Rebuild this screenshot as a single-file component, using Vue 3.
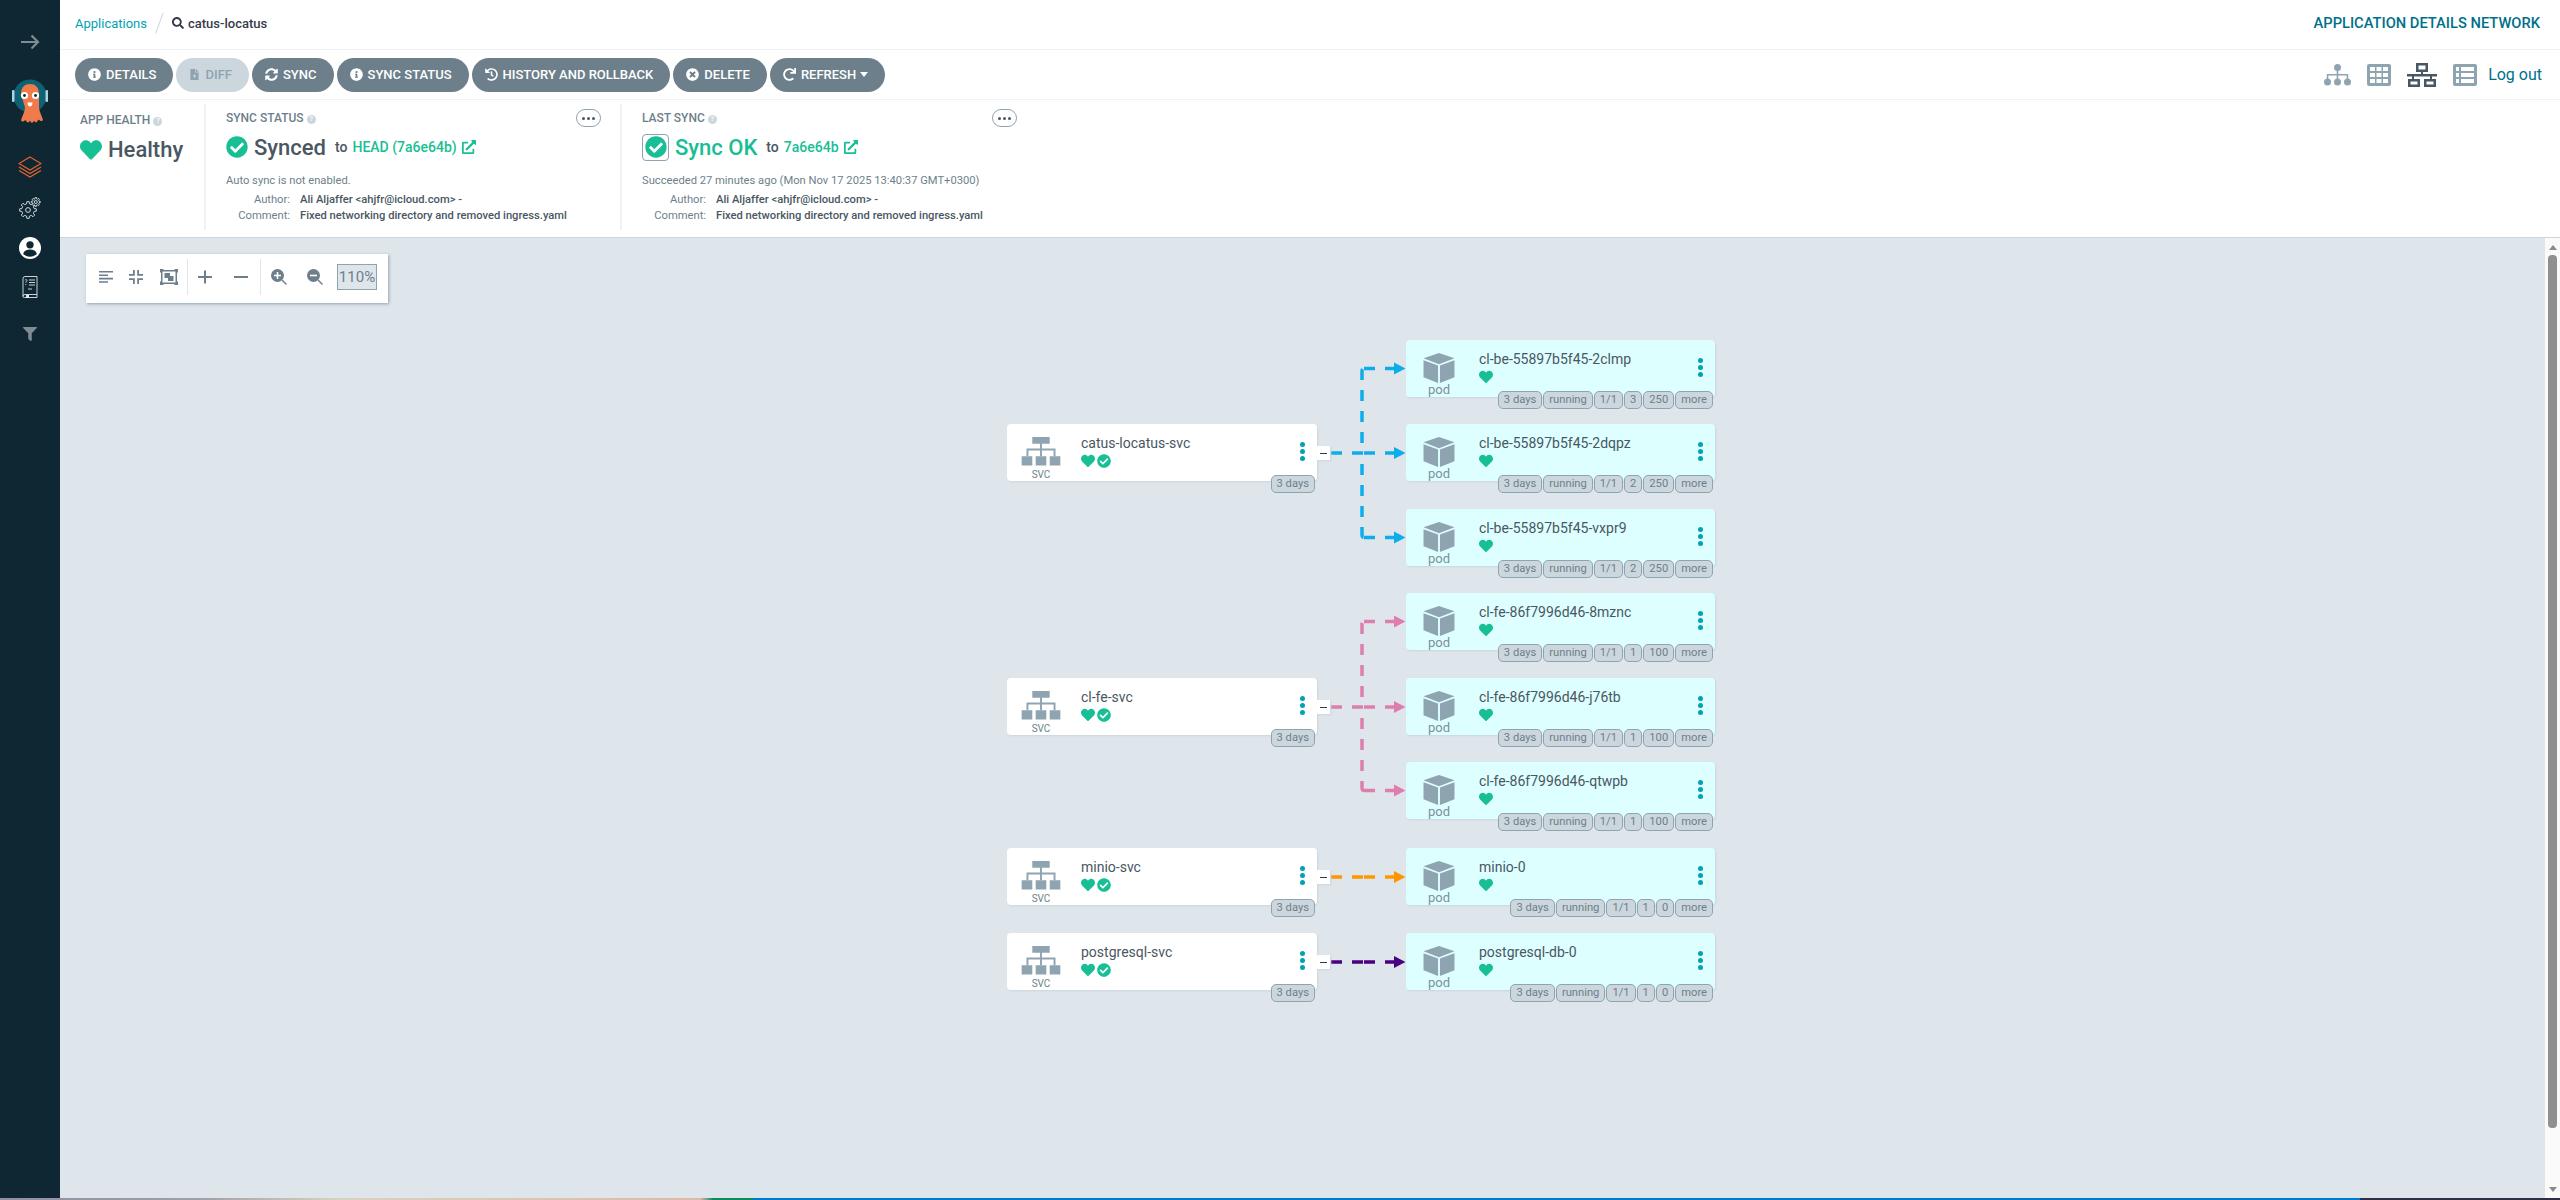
<template>
  <div class="page">
    <div class="frame">
      <aside class="sidebar">
        <svg class="nav-arrow" viewBox="0 0 20 16"><path d="M1 8h17M11.500 1.500 18 8l-6.500 6.500" fill="none" stroke="currentColor" stroke-width="2.200" /></svg>
        <svg class="nav-logo" viewBox="0 0 36 50">
          <circle cx="18" cy="18" r="16.500" fill="#0f6174" />
          <rect x="0" y="12" width="2.500" height="12" rx="1" fill="#a9d3de" />
          <rect x="33.500" y="12" width="2.500" height="12" rx="1" fill="#a9d3de" />
          <path d="M9 16c0-7 4-10 9-10s9 3 9 10v13c0 4 3 9 4 13-3 3-3-1-5 0-1 3-3 3-4 .5-1 3-3 3-4 0-1 2.500-3 2.500-4 0-2-1-2 3-5 0 1-4 4-9 4-13z" fill="#ef7b4d" />
          <circle cx="12.500" cy="17.500" r="3.600" fill="#fff" />
          <circle cx="23.500" cy="17.500" r="3.600" fill="#fff" />
          <circle cx="12.500" cy="17.500" r="1.400" fill="#222" />
          <circle cx="23.500" cy="17.500" r="1.400" fill="#222" />
          <path d="M15.500 24.500h5c0 3-1.500 4-2.500 4s-2.500-1-2.500-4z" fill="#fff" />
        </svg>
        <svg class="nav-layers" viewBox="0 0 24 22" fill="none" stroke="#e8632f" stroke-width="1.100"><path d="M12 1 23 7.500 12 14 1 7.500z" /><path d="M1 11 12 17.500 23 11" /><path d="M1 14.500 12 21 23 14.500" /></svg>
        <svg class="nav-gear" viewBox="0 0 22 22" fill="none" stroke="#dfe6ea" stroke-width=".9">
          <path :d="gearBig" />
          <circle cx="9" cy="13" r="2.400" />
          <path :d="gearSmall" fill="#0f2733" />
          <circle cx="16.800" cy="5" r="1.500" />
        </svg>
        <svg class="nav-user" viewBox="0 0 24 24"><circle cx="12" cy="12" r="12" fill="#fff" /><circle cx="12" cy="8.500" r="4" fill="#0f2733" /><path d="M4.500 18.500c1-3.500 4-4.800 7.500-4.800s6.500 1.300 7.500 4.800c-2 1.800-4.500 3-7.500 3s-5.500-1.200-7.500-3z" fill="#0f2733" /></svg>
        <svg class="nav-book" viewBox="0 0 16 22" fill="none" stroke="#dfe6ea" stroke-width=".9"><path d="M1 2.500A2 2 0 0 1 3 .5h12v18H3A2 2 0 0 0 1 20.500 1.200 1.200 0 0 0 2.500 21.500H15v-3M1 20.500V2.500" /><path d="M7 4h6M7 6.500h6M7 9h6M6 13h4" /><path d="M3 4.200c.8-1.200 2.200-.5 1.800.6-.3.8-1 .9-1 1.900M3.800 8v.9" /><rect x="4" y="19" width="3" height="3" fill="#dfe6ea" stroke="none" /></svg>
        <svg class="nav-filter" viewBox="0 0 512 512"><path :d="icons.filter" /></svg>
      </aside>

      <main class="content">
        <header class="topbar">
          <div class="crumbs">
            <a class="crumb-link">Applications</a>
            <span class="crumb-slash"></span>
            <svg class="crumb-search" viewBox="0 0 512 512"><path :d="icons.search" /></svg>
            <span class="crumb-name">catus-locatus</span>
          </div>
          <div class="page-title">APPLICATION DETAILS NETWORK</div>
        </header>

        <div class="toolbar">
          <div class="actions">
            <button v-for="a in actions" :key="a.label" class="action" :class="{ disabled: a.disabled }">
              <svg class="action-icon" viewBox="0 0 512 512"><path :d="icons[a.icon]" /></svg>
              {{ a.label }}
              <span v-if="a.caret" class="caret"></span>
            </button>
          </div>
          <div class="views">
            <svg class="view-icon view-tree" viewBox="0 0 27 22">
              <circle cx="13.500" cy="3.500" r="3.500" /><circle cx="3.500" cy="18" r="3.500" /><circle cx="13.500" cy="18" r="3.500" /><circle cx="23.500" cy="18" r="3.500" />
              <path d="M12.700 6h1.600v4h9.900v5h-1.500v-3.500h-8.400V15h-1.600v-3.500H4.300V15H2.800v-5h9.900z" />
            </svg>
            <svg class="view-icon view-grid" viewBox="0 0 24 22">
              <path fill-rule="evenodd" d="M2 0h20a2 2 0 0 1 2 2v18a2 2 0 0 1-2 2H2a2 2 0 0 1-2-2V2a2 2 0 0 1 2-2zm1 3v4h5V3zm6.500 0v4h5V3zM16 3v4h5V3zM3 9v4h5V9zm6.500 0v4h5V9zM16 9v4h5V9zM3 15v4h5v-4zm6.500 0v4h5v-4zM16 15v4h5v-4z" />
            </svg>
            <svg class="view-icon view-net" viewBox="0 0 30 24">
              <path fill-rule="evenodd" d="M9 0h12v9h-5v2h14v2.500h-5V16h4v8H17v-8h6v-2.500H7V16h6v8H1v-8h4v-2.500H0V11h14V9H9zm2.500 2.500v4h7v-4zM3.500 18.500v3h7v-3zm16 0v3h7v-3z" />
            </svg>
            <svg class="view-icon view-list" viewBox="0 0 24 22">
              <path fill-rule="evenodd" d="M2 0h20a2 2 0 0 1 2 2v18a2 2 0 0 1-2 2H2a2 2 0 0 1-2-2V2a2 2 0 0 1 2-2zm1 3v4h3V3zm5 0v4h13V3zM3 9v4h3V9zm5 0v4h13V9zM3 15v4h3v-4zm5 0v4h13v-4z" />
            </svg>
            <a class="logout">Log out</a>
          </div>
        </div>

        <section class="summary">
          <div class="panel panel-health">
            <div class="panel-label">APP HEALTH <span class="help">?</span></div>
            <div class="big-row health-row">
              <svg class="big-icon heart-big" viewBox="0 0 512 512"><path :d="icons.heart" /></svg>
              <span class="big-text">Healthy</span>
            </div>
          </div>

          <div class="panel panel-sync">
            <div class="panel-label">SYNC STATUS <span class="help">?</span></div>
            <button class="more-btn"><i></i><i></i><i></i></button>
            <div class="big-row">
              <svg class="big-icon" viewBox="0 0 512 512"><path :d="icons.check" /></svg>
              <span class="big-text">Synced</span>
              <span class="to">to</span>
              <a class="rev">HEAD (7a6e64b)</a>
              <svg class="ext" viewBox="0 0 512 512"><path :d="icons.external" /></svg>
            </div>
            <div class="note">Auto sync is not enabled.</div>
            <div class="meta">
              <span class="meta-key">Author:</span><span class="meta-val">Ali Aljaffer &lt;ahjfr@icloud.com&gt; -</span>
              <span class="meta-key">Comment:</span><span class="meta-val">Fixed networking directory and removed ingress.yaml</span>
            </div>
          </div>

          <div class="panel panel-last">
            <div class="panel-label">LAST SYNC <span class="help">?</span></div>
            <button class="more-btn"><i></i><i></i><i></i></button>
            <div class="big-row">
              <span class="ok-box"><svg viewBox="0 0 512 512"><path :d="icons.check" /></svg></span>
              <span class="big-text ok-text">Sync OK</span>
              <span class="to">to</span>
              <a class="rev">7a6e64b</a>
              <svg class="ext" viewBox="0 0 512 512"><path :d="icons.external" /></svg>
            </div>
            <div class="note">Succeeded 27 minutes ago (Mon Nov 17 2025 13:40:37 GMT+0300)</div>
            <div class="meta">
              <span class="meta-key">Author:</span><span class="meta-val">Ali Aljaffer &lt;ahjfr@icloud.com&gt; -</span>
              <span class="meta-key">Comment:</span><span class="meta-val">Fixed networking directory and removed ingress.yaml</span>
            </div>
          </div>
        </section>

        <div class="graph-row">
          <div class="graph">
            <div class="zoom-panel">
              <button class="zb zb-30"><svg viewBox="0 0 14 14"><path d="M0 1h14v1.600H0zM0 4.400h9V6H0zM0 7.800h14v1.600H0zM0 11.200h9v1.600H0z" /></svg></button>
              <button class="zb zb-30"><svg viewBox="0 0 14 14"><path d="M4 0h1.800v5.800H0V4h4zM8.200 0H10v4h4v1.800H8.200zM0 8.200h5.800V14H4v-4H0zM8.200 8.200H14V10h-4v4H8.200z" /></svg></button>
              <button class="zb zb-36"><svg class="fit" viewBox="0 0 18 16"><path fill-rule="evenodd" d="M0 0h3.500v1h11V0H18v3.500h-1v9h1V16h-3.500v-1h-11v1H0v-3.500h1v-9H0zm2.500 2.500v11h13v-11z" /><path d="M4.500 4h5.500v3h3.500v5H8V9H4.500z" /></svg></button>
              <span class="zdiv"></span>
              <button class="zb zb-34"><svg viewBox="0 0 14 14"><path d="M6 .5h2V6h6v2H8v5.500H6V8H0V6h6z" /></svg></button>
              <button class="zb zb-38"><svg viewBox="0 0 14 14"><path d="M0 6h14v2H0z" /></svg></button>
              <span class="zdiv"></span>
              <button class="zb zb-36"><svg class="mag" viewBox="0 0 16 16"><circle cx="6.500" cy="6.500" r="6.500" /><path d="M10.500 11.500l1-1L16 15l-1 1z" /><path fill="#fff" d="M5.700 3h1.600v2.700H10v1.600H7.300V10H5.700V7.300H3V5.700h2.700z" /></svg></button>
              <button class="zb zb-36"><svg class="mag" viewBox="0 0 16 16"><circle cx="6.500" cy="6.500" r="6.500" /><path d="M10.500 11.500l1-1L16 15l-1 1z" /><path fill="#fff" d="M3 5.700h7v1.600H3z" /></svg></button>
              <span class="zoom-level">110%</span>
            </div>

            <svg class="edges" width="2485" height="960">
              <g v-for="(e, i) in edges" :key="i">
                <path :d="e.d" fill="none" :stroke="e.color" stroke-width="3.500" stroke-dasharray="11 10" />
                <polygon v-if="e.tip" :points="e.tip" :fill="e.color" />
              </g>
            </svg>

            <div v-for="n in services" :key="n.name" class="node" :style="{ left: n.x + 'px', top: n.y + 'px' }">
              <div class="node-kind">
                <svg class="svc-icon" viewBox="0 0 40 30">
                  <path d="M11 0h18v7H21v5h14v8h-2v-6H21v6h-2v-6H7v6H5v-8h14V7h-8z" />
                  <path d="M0 20h11v9.500H0zM14.500 20h11v9.500h-11zM29 20h11v9.500H29z" />
                </svg>
                <span class="svc-label">SVC</span>
              </div>
              <div class="node-body">
                <div class="node-name">{{ n.name }}</div>
                <div class="node-status">
                  <svg viewBox="0 0 512 512"><path :d="icons.heart" /></svg>
                  <svg viewBox="0 0 512 512"><path :d="icons.check" /></svg>
                </div>
              </div>
              <span class="kebab"><i></i><i></i><i></i></span>
              <span class="collapse"></span>
              <div class="tags"><span class="tag">3 days</span></div>
            </div>

            <div v-for="p in pods" :key="p.name" class="node pod" :style="{ left: p.x + 'px', top: p.y + 'px' }">
              <div class="node-kind pod-kind">
                <svg class="pod-icon" viewBox="0 0 32 31">
                  <path d="M16 0 32 5.500 16 11.500 0 5.500z" />
                  <path d="M0 7.500 15 13v18L0 25z" />
                  <path d="M32 7.500 17 13v18l15-6z" />
                </svg>
                <span class="pod-label">pod</span>
              </div>
              <div class="node-body">
                <div class="node-name">{{ p.name }}</div>
                <div class="node-status">
                  <svg viewBox="0 0 512 512"><path :d="icons.heart" /></svg>
                </div>
              </div>
              <span class="kebab"><i></i><i></i><i></i></span>
              <div class="tags">
                <span v-for="t in p.tags" :key="t" class="tag">{{ t }}</span>
              </div>
            </div>
          </div>

          <div class="scrollbar">
            <span class="sb-up"></span>
            <span class="sb-thumb"></span>
            <span class="sb-down"></span>
          </div>
        </div>
      </main>
    </div>
    <div class="taskstrip"></div>
  </div>
</template>

<script setup>
const icons = {
  heart: 'M462.3 62.6C407.5 15.9 326 24.3 275.7 76.2L256 96.5l-19.7-20.3C186.1 24.3 104.5 15.9 49.7 62.6c-62.8 53.6-66.1 149.8-9.9 207.9l193.5 199.8c12.5 12.9 32.8 12.9 45.3 0l193.5-199.8c56.3-58.1 53-154.3-9.8-207.9z',
  check: 'M504 256c0 136.967-111.033 248-248 248S8 392.967 8 256 119.033 8 256 8s248 111.033 248 248zM227.314 387.314l184-184c6.248-6.248 6.248-16.379 0-22.627l-22.627-22.627c-6.248-6.249-16.379-6.249-22.628 0L216 308.118l-70.059-70.059c-6.248-6.248-16.379-6.248-22.628 0l-22.627 22.627c-6.248 6.248-6.248 16.379 0 22.627l104 104c6.249 6.249 16.379 6.249 22.628.001z',
  info: 'M256 8C119.043 8 8 119.083 8 256c0 136.997 111.043 248 248 248s248-111.003 248-248C504 119.083 392.957 8 256 8zm0 110c23.196 0 42 18.804 42 42s-18.804 42-42 42-42-18.804-42-42 18.804-42 42-42zm56 254c0 6.627-5.373 12-12 12h-88c-6.627 0-12-5.373-12-12v-24c0-6.627 5.373-12 12-12h12v-64h-12c-6.627 0-12-5.373-12-12v-24c0-6.627 5.373-12 12-12h64c6.627 0 12 5.373 12 12v100h12c6.627 0 12 5.373 12 12v24z',
  times: 'M256 8C119 8 8 119 8 256s111 248 248 248 248-111 248-248S393 8 256 8zm121.600 313.100c4.700 4.700 4.700 12.300 0 17L338 377.600c-4.700 4.700-12.300 4.700-17 0L256 312l-65.100 65.600c-4.700 4.700-12.300 4.700-17 0L134.400 338c-4.700-4.700-4.700-12.300 0-17l65.600-65-65.600-65.100c-4.700-4.700-4.700-12.300 0-17l39.600-39.600c4.700-4.700 12.300-4.700 17 0l65 65.700 65.100-65.600c4.700-4.700 12.300-4.700 17 0l39.600 39.600c4.700 4.700 4.700 12.300 0 17L312 256l65.600 65.100z',
  sync: 'M370.720 133.280C339.458 104.008 298.888 87.962 255.848 88c-77.458.068-144.328 53.178-162.791 126.850-1.344 5.363-6.122 9.150-11.651 9.150H24.103c-7.498 0-13.194-6.807-11.807-14.176C33.933 94.924 134.813 8 256 8c66.448 0 126.791 26.136 171.315 68.685L463.030 40.970C478.149 25.851 504 36.559 504 57.941V192c0 13.255-10.745 24-24 24H345.941c-21.382 0-32.090-25.851-16.971-40.971l41.750-41.749zM32 296h134.059c21.382 0 32.090 25.851 16.971 40.971l-41.750 41.750c31.262 29.273 71.835 45.319 114.876 45.280 77.418-.070 144.315-53.144 162.787-126.849 1.344-5.363 6.122-9.150 11.651-9.150h57.304c7.498 0 13.194 6.807 11.807 14.176C478.067 417.076 377.187 504 256 504c-66.448 0-126.791-26.136-171.315-68.685L48.970 471.030C33.851 486.149 8 475.441 8 454.059V320c0-13.255 10.745-24 24-24z',
  redo: 'M500.330 0h-47.410a12 12 0 0 0-12 12.570l4 82.760A247.420 247.420 0 0 0 256 8C119.340 8 7.900 119.530 8 256.190 8.100 393.070 119.100 504 256 504a247.100 247.100 0 0 0 166.180-63.910 12 12 0 0 0 .480-17.430l-34-34a12 12 0 0 0-16.380-.550A176 176 0 1 1 402.100 157.800l-101.530-4.870a12 12 0 0 0-12.570 12v47.410a12 12 0 0 0 12 12h200.330a12 12 0 0 0 12-12V12a12 12 0 0 0-12-12z',
  history: 'M504 255.531c.253 136.640-111.180 248.372-247.820 248.468-59.015.042-113.223-20.530-155.822-54.911-11.077-8.940-11.905-25.541-1.839-35.607l11.267-11.267c8.609-8.609 22.353-9.551 31.891-1.984C173.062 425.135 212.781 440 256 440c101.705 0 184-82.311 184-184 0-101.705-82.311-184-184-184-48.814 0-93.149 18.969-126.068 49.932l50.754 50.754c10.080 10.080 2.941 27.314-11.313 27.314H24c-8.837 0-16-7.163-16-16V38.627c0-14.254 17.234-21.393 27.314-11.314l49.372 49.372C129.209 34.136 189.552 8 256 8c136.810 0 247.747 110.780 248 247.531zm-180.912 78.784l9.823-12.630c8.138-10.463 6.253-25.542-4.210-33.679L288 256.349V152c0-13.255-10.745-24-24-24h-16c-13.255 0-24 10.745-24 24v135.651l65.409 50.874c10.463 8.137 25.541 6.253 33.679-4.210z',
  diff: 'M288 0v144c0 8.800 7.200 16 16 16h144v328c0 13.300-10.700 24-24 24H88c-13.300 0-24-10.700-24-24V24C64 10.700 74.700 0 88 0zm32 0 128 128H320zM236 250v56h-56v40h56v56h40v-56h56v-40h-56v-56z',
  external: 'M432 320h-32a16 16 0 0 0-16 16v112H64V128h144a16 16 0 0 0 16-16V80a16 16 0 0 0-16-16H48a48 48 0 0 0-48 48v352a48 48 0 0 0 48 48h352a48 48 0 0 0 48-48V336a16 16 0 0 0-16-16zM488 0H360c-21.370 0-32.050 25.910-17 41l35.730 35.730L135 320.370a24 24 0 0 0 0 34L157.670 377a24 24 0 0 0 34 0l243.610-243.680L471 169c15 15 41 4.500 41-17V24a24 24 0 0 0-24-24z',
  search: 'M505 442.700L405.300 343c-4.500-4.500-10.600-7-17-7H372c27.600-35.300 44-79.700 44-128C416 93.100 322.900 0 208 0S0 93.100 0 208s93.100 208 208 208c48.300 0 92.700-16.400 128-44v16.300c0 6.400 2.500 12.500 7 17l99.700 99.700c9.400 9.400 24.600 9.400 33.900 0l28.300-28.300c9.400-9.400 9.400-24.600.1-34zM208 336c-70.700 0-128-57.200-128-128 0-70.700 57.200-128 128-128 70.700 0 128 57.200 128 128 0 70.700-57.200 128-128 128z',
  filter: 'M487.976 0H24.028C2.710 0-8.047 25.866 7.058 40.971L192 225.941V432c0 7.831 3.821 15.170 10.237 19.662l80 55.980C298.020 518.690 320 507.493 320 487.980V225.941l184.947-184.970C520.021 25.896 509.338 0 487.976 0z'
}

const gear = (cx, cy, outer, inner, teeth) => {
  const step = (Math.PI * 2) / teeth
  const pts = []
  for (let i = 0; i < teeth; i++) {
    const a = i * step
    const at = (r, t) => `${(cx + r * Math.cos(a + t * step)).toFixed(2)} ${(cy + r * Math.sin(a + t * step)).toFixed(2)}`
    pts.push(at(inner, -0.3), at(outer, -0.18), at(outer, 0.18), at(inner, 0.3))
  }
  return `M${pts.join('L')}z`
}
const gearBig = gear(9, 13, 8.400, 6.300, 8)
const gearSmall = gear(16.800, 5, 4.500, 3.300, 8)

const actions = [
  { label: 'DETAILS', icon: 'info' },
  { label: 'DIFF', icon: 'diff', disabled: true },
  { label: 'SYNC', icon: 'sync' },
  { label: 'SYNC STATUS', icon: 'info' },
  { label: 'HISTORY AND ROLLBACK', icon: 'history' },
  { label: 'DELETE', icon: 'times' },
  { label: 'REFRESH', icon: 'redo', caret: true }
]

// graph coordinates, relative to the canvas at (60, 238)
const svcLeft = 947
const podLeft = 1346

const services = [
  { name: 'catus-locatus-svc', y: 186 },
  { name: 'cl-fe-svc', y: 440 },
  { name: 'minio-svc', y: 610 },
  { name: 'postgresql-svc', y: 695 }
].map((s) => ({ ...s, x: svcLeft }))

const be = ['3 days', 'running', '1/1']
const pods = [
  { name: 'cl-be-55897b5f45-2clmp', y: 102, tags: [...be, '3', '250', 'more'] },
  { name: 'cl-be-55897b5f45-2dqpz', y: 186, tags: [...be, '2', '250', 'more'] },
  { name: 'cl-be-55897b5f45-vxpr9', y: 271, tags: [...be, '2', '250', 'more'] },
  { name: 'cl-fe-86f7996d46-8mznc', y: 355, tags: [...be, '1', '100', 'more'] },
  { name: 'cl-fe-86f7996d46-j76tb', y: 440, tags: [...be, '1', '100', 'more'] },
  { name: 'cl-fe-86f7996d46-qtwpb', y: 524, tags: [...be, '1', '100', 'more'] },
  { name: 'minio-0', y: 610, tags: [...be, '1', '0', 'more'] },
  { name: 'postgresql-db-0', y: 695, tags: [...be, '1', '0', 'more'] }
].map((p) => ({ ...p, x: podLeft }))

const startX = 1271
const bendX = 1302
const headX = 1334
const tipX = 1345.500

const arrow = (y) => `${headX},${y - 6} ${tipX},${y} ${headX},${y + 6}`

// each hop of an edge restarts its dash, like the separately drawn segments of the tree
const edgeGroup = (color, svcY, podYs) => {
  const from = svcY + 29
  const out = [{ d: `M${startX} ${from}H${bendX + 1}`, color }]
  podYs.forEach((py) => {
    const bent = Math.abs(py - svcY) > 1
    const to = bent ? py + 28.500 : from
    if (bent) {
      const dir = to < from ? -1 : 1
      const start = dir < 0 ? from - 10 : from + 11
      out.push({ d: `M${bendX} ${start}V${to - dir * 3}Q${bendX} ${to} ${bendX + 2} ${to}`, color })
    }
    out.push({ d: `M${bendX + 2} ${to}H${headX + 1}`, color, tip: arrow(to) })
  })
  return out
}

const edges = [
  ...edgeGroup('#0DADEA', 186, [102, 186, 271]),
  ...edgeGroup('#DE7EAE', 440, [355, 440, 524]),
  ...edgeGroup('#FF9500', 610, [610]),
  ...edgeGroup('#4B0082', 695, [695])
]
</script>

<style>
html,
body {
  margin: 0;
  background: #fff;
}
</style>

<style scoped>
.page {
  display: flex;
  flex-direction: column;
  height: 1200px;
  overflow: hidden;
  font-family: Roboto, 'Liberation Sans', sans-serif;
  color: #363c4a;
}

.frame {
  flex: 1;
  display: flex;
  min-height: 0;
}

.taskstrip {
  height: 2px;
  background: linear-gradient(
    90deg,
    #8f8fa3 0,
    #a0a0a8 200px,
    #d9d2bd 340px,
    #deb9a8 700px,
    #0f8a5f 713px,
    #0f8a5f 753px,
    #007acc 753px,
    #007acc 2360px,
    #2e2e44 2360px
  );
}

.sidebar {
  width: 60px;
  flex: none;
  background: #0f2733;
  display: flex;
  flex-direction: column;
  align-items: center;
}

.nav-arrow {
  width: 20px;
  height: 16px;
  margin-top: 34px;
  color: #7f8c94;
}

.nav-logo {
  width: 36px;
  height: 50px;
  margin-top: 28px;
}

.nav-layers {
  width: 24px;
  height: 22px;
  margin-top: 28px;
}

.nav-gear {
  width: 22px;
  height: 22px;
  margin-top: 19px;
}

.nav-user {
  width: 22px;
  height: 22px;
  margin-top: 18px;
}

.nav-book {
  width: 16px;
  height: 22px;
  margin-top: 17px;
}

.nav-filter {
  width: 14px;
  height: 14px;
  margin-top: 29px;
  fill: #7f8c94;
}

.content {
  flex: 1;
  min-width: 0;
  display: flex;
  flex-direction: column;
}

.topbar {
  height: 50px;
  box-sizing: border-box;
  border-bottom: 1px solid #eff3f5;
  display: flex;
  align-items: center;
  justify-content: space-between;
  padding: 0 20px 3px 15px;
  flex: none;
}

.crumbs {
  display: flex;
  align-items: center;
}

.crumb-link {
  font-size: 13px;
  color: #00a2b3;
}

.crumb-slash {
  width: 1px;
  height: 22px;
  margin: 0 12px 0 12px;
  background: #ccd6dd;
  transform: rotate(20deg);
}

.crumb-search {
  width: 12px;
  height: 12px;
  margin-right: 4px;
  fill: #363c4a;
}

.crumb-name {
  font-size: 13px;
  font-weight: 500;
}

.page-title {
  font-size: 14.700px;
  font-weight: 500;
  color: #006f8a;
}

.toolbar {
  height: 50px;
  box-sizing: border-box;
  border-bottom: 1px solid #eff3f5;
  display: flex;
  align-items: center;
  justify-content: space-between;
  padding: 0 18px 0 15px;
  flex: none;
}

.actions {
  display: flex;
  gap: 3px;
}

.action {
  height: 34px;
  border: 0;
  border-radius: 17px;
  background: #6d7f8b;
  color: #fff;
  font: 500 13px Roboto, sans-serif;
  padding: 0 17px 0 13px;
  display: flex;
  align-items: center;
  gap: 5px;
  white-space: nowrap;
}

.action.disabled {
  background: #ccd6dd;
  color: #8fa4b1;
}

.action.disabled .action-icon {
  width: 11px;
}

.action-icon {
  width: 13px;
  height: 13px;
  fill: currentColor;
}

.caret {
  width: 0;
  height: 0;
  border-left: 4px solid transparent;
  border-right: 4px solid transparent;
  border-top: 5px solid #fff;
  margin-left: -1px;
}

.views {
  display: flex;
  align-items: center;
}

.view-icon {
  fill: #8fa4b1;
  flex: none;
}

.view-tree {
  width: 27px;
  height: 22px;
  margin-right: 16px;
}

.view-grid {
  width: 24px;
  height: 22px;
  margin-right: 16px;
}

.view-net {
  width: 30px;
  height: 24px;
  margin-right: 16px;
  fill: #495763;
}

.view-list {
  width: 24px;
  height: 22px;
  margin-right: 11px;
}

.logout {
  font-size: 16px;
  color: #006f8a;
}

.summary {
  height: 138px;
  flex: none;
  display: flex;
  box-sizing: border-box;
  padding: 4px 0 7px;
  border-bottom: 1px solid #ccd6dd;
  background: #fff;
}

.panel {
  position: relative;
  box-sizing: border-box;
  padding: 6px 0 0 20px;
  border-right: 2px solid #eff3f5;
  flex: none;
}

.panel-health {
  width: 146px;
  padding-top: 8px;
}

.panel-sync {
  width: 416px;
}

.panel-last {
  flex: 1;
  border-right: 0;
}

.panel-label {
  font-size: 12px;
  font-weight: 500;
  line-height: 16px;
  color: #6d7f8b;
}

.help {
  display: inline-block;
  width: 9px;
  height: 9px;
  border-radius: 50%;
  background: #ccd6dd;
  color: #fff;
  font-size: 7px;
  line-height: 9px;
  text-align: center;
  vertical-align: 1px;
}

.more-btn {
  position: absolute;
  top: 5px;
  left: 370px;
  width: 25px;
  height: 18px;
  padding: 0;
  box-sizing: border-box;
  background: #fff;
  border: 1px solid #8fa4b1;
  border-radius: 9px;
  display: flex;
  align-items: center;
  justify-content: center;
  gap: 2px;
}

.more-btn i {
  width: 3px;
  height: 3px;
  border-radius: 50%;
  background: #495763;
}

.big-row {
  display: flex;
  align-items: center;
  height: 30px;
  margin-top: 6px;
}

.health-row {
  margin-top: 6px;
}

.big-icon {
  width: 22px;
  height: 22px;
  fill: #18be94;
  margin-right: 6px;
  flex: none;
}

.heart-big {
  margin-top: 2px;
}

.big-text {
  font-size: 22px;
  font-weight: 500;
  color: #495763;
}

.ok-text {
  color: #18be94;
}

.ok-box {
  width: 27px;
  height: 27px;
  box-sizing: border-box;
  border: 1px solid #8fa4b1;
  border-radius: 4px;
  margin-right: 6px;
  display: flex;
  align-items: center;
  justify-content: center;
}

.ok-box svg {
  width: 22px;
  height: 22px;
  fill: #18be94;
}

.to {
  font-size: 14px;
  font-weight: 500;
  color: #495763;
  margin-left: 9px;
  margin-right: 5px;
}

.rev {
  font-size: 14px;
  font-weight: 500;
  color: #18be94;
}

.ext {
  width: 14px;
  height: 14px;
  margin-left: 5px;
  fill: #18be94;
}

.note {
  font-size: 11.200px;
  line-height: 14px;
  color: #6d7f8b;
  margin-top: 12px;
}

.meta {
  display: grid;
  grid-template-columns: 64px auto;
  column-gap: 10px;
  justify-content: start;
  font-size: 11.200px;
  line-height: 16px;
  margin-top: 4px;
}

.meta-key {
  text-align: right;
  color: #6d7f8b;
}

.meta-val {
  font-weight: 500;
  color: #495763;
}

.graph-row {
  flex: 1;
  display: flex;
  min-height: 0;
}

.graph {
  flex: 1;
  min-width: 0;
  position: relative;
  background: #dee6eb;
  overflow: hidden;
}

.zoom-panel {
  position: absolute;
  left: 26px;
  top: 16px;
  width: 302px;
  height: 49px;
  box-sizing: border-box;
  padding: 0 0 3px 5px;
  background: #fff;
  display: flex;
  align-items: center;
  box-shadow: 1px 1px 3px #8fa4b1;
}

.zb {
  height: 30px;
  padding: 0;
  border: 0;
  background: none;
  display: flex;
  align-items: center;
  justify-content: center;
}

.zb svg {
  width: 14px;
  height: 14px;
  fill: #6d7f8b;
}

.zb .fit {
  width: 18px;
  height: 16px;
}

.zb .mag {
  width: 16px;
  height: 16px;
}

.zb-30 {
  width: 30px;
}

.zb-34 {
  width: 34px;
}

.zb-36 {
  width: 36px;
}

.zb-38 {
  width: 38px;
}

.zdiv {
  width: 1px;
  height: 36px;
  background: #dee6eb;
}

.zoom-level {
  width: 40px;
  height: 26px;
  margin-left: 4px;
  box-sizing: border-box;
  background: #dee6eb;
  border: 1px solid #8fa4b1;
  font-size: 15px;
  line-height: 24px;
  text-align: center;
  color: #6d7f8b;
}

.edges {
  position: absolute;
  left: 0;
  top: 0;
}

.node {
  position: absolute;
  width: 310px;
  height: 57px;
  border-radius: 4px;
  background: #fff;
  box-shadow: 1px 1px 2px #ccd6dd;
  display: flex;
}

.pod {
  width: 309px;
  background: #deffff;
}

.node-kind {
  width: 68px;
  margin-right: 6px;
  flex: none;
  display: flex;
  flex-direction: column;
  align-items: center;
  padding-top: 13px;
  box-sizing: border-box;
}

.svc-icon {
  width: 40px;
  height: 30px;
  fill: #8fa4b1;
}

.svc-label {
  font-size: 10px;
  line-height: 12px;
  margin-top: 3px;
  color: #6d7f8b;
}

.pod-kind {
  width: 66px;
  margin-right: 7px;
  padding-top: 13px;
}

.pod-icon {
  width: 32px;
  height: 31px;
  fill: #8fa4b1;
}

.pod-label {
  font-size: 13px;
  line-height: 14px;
  color: #7d8f9b;
}

.node-body {
  padding-top: 10px;
}

.node-name {
  font-size: 14px;
  line-height: 18px;
  color: #495763;
  white-space: nowrap;
}

.node-status {
  display: flex;
  gap: 2px;
  margin-top: 2px;
}

.node-status svg {
  width: 14px;
  height: 14px;
  fill: #18be94;
}

.kebab {
  position: absolute;
  right: 12px;
  top: 18px;
  display: flex;
  flex-direction: column;
  gap: 2px;
}

.kebab i {
  width: 5px;
  height: 5px;
  border-radius: 50%;
  background: #00a2b3;
}

.collapse {
  position: absolute;
  left: 310px;
  top: 22px;
  width: 13px;
  height: 14px;
  background: #fff;
  box-shadow: 1px 1px 2px #ccd6dd;
}

.collapse::after {
  content: '';
  position: absolute;
  left: 3px;
  right: 3px;
  top: 6.500px;
  height: 1px;
  background: #363c4a;
}

.tags {
  position: absolute;
  right: 2px;
  bottom: -12px;
  display: flex;
  gap: 1px;
}

.tag {
  height: 18px;
  box-sizing: border-box;
  padding: 0 5px;
  border: 1px solid #8fa4b1;
  border-radius: 5px;
  background: #ccd6dd;
  font-size: 11.200px;
  line-height: 16px;
  color: #6d7f8b;
  white-space: nowrap;
}

.scrollbar {
  width: 15px;
  flex: none;
  background: #fafafa;
  display: flex;
  flex-direction: column;
  align-items: center;
  padding: 7px 0 6px;
  box-sizing: border-box;
}

.sb-up,
.sb-down {
  width: 0;
  height: 0;
  border-left: 4px solid transparent;
  border-right: 4px solid transparent;
}

.sb-up {
  border-bottom: 5px solid #8a8a8a;
}

.sb-down {
  border-top: 5px solid #8a8a8a;
  margin-top: auto;
}

.sb-thumb {
  width: 9px;
  height: 873px;
  margin-top: 5px;
  border-radius: 4px;
  background: #8f8f8f;
}
</style>
